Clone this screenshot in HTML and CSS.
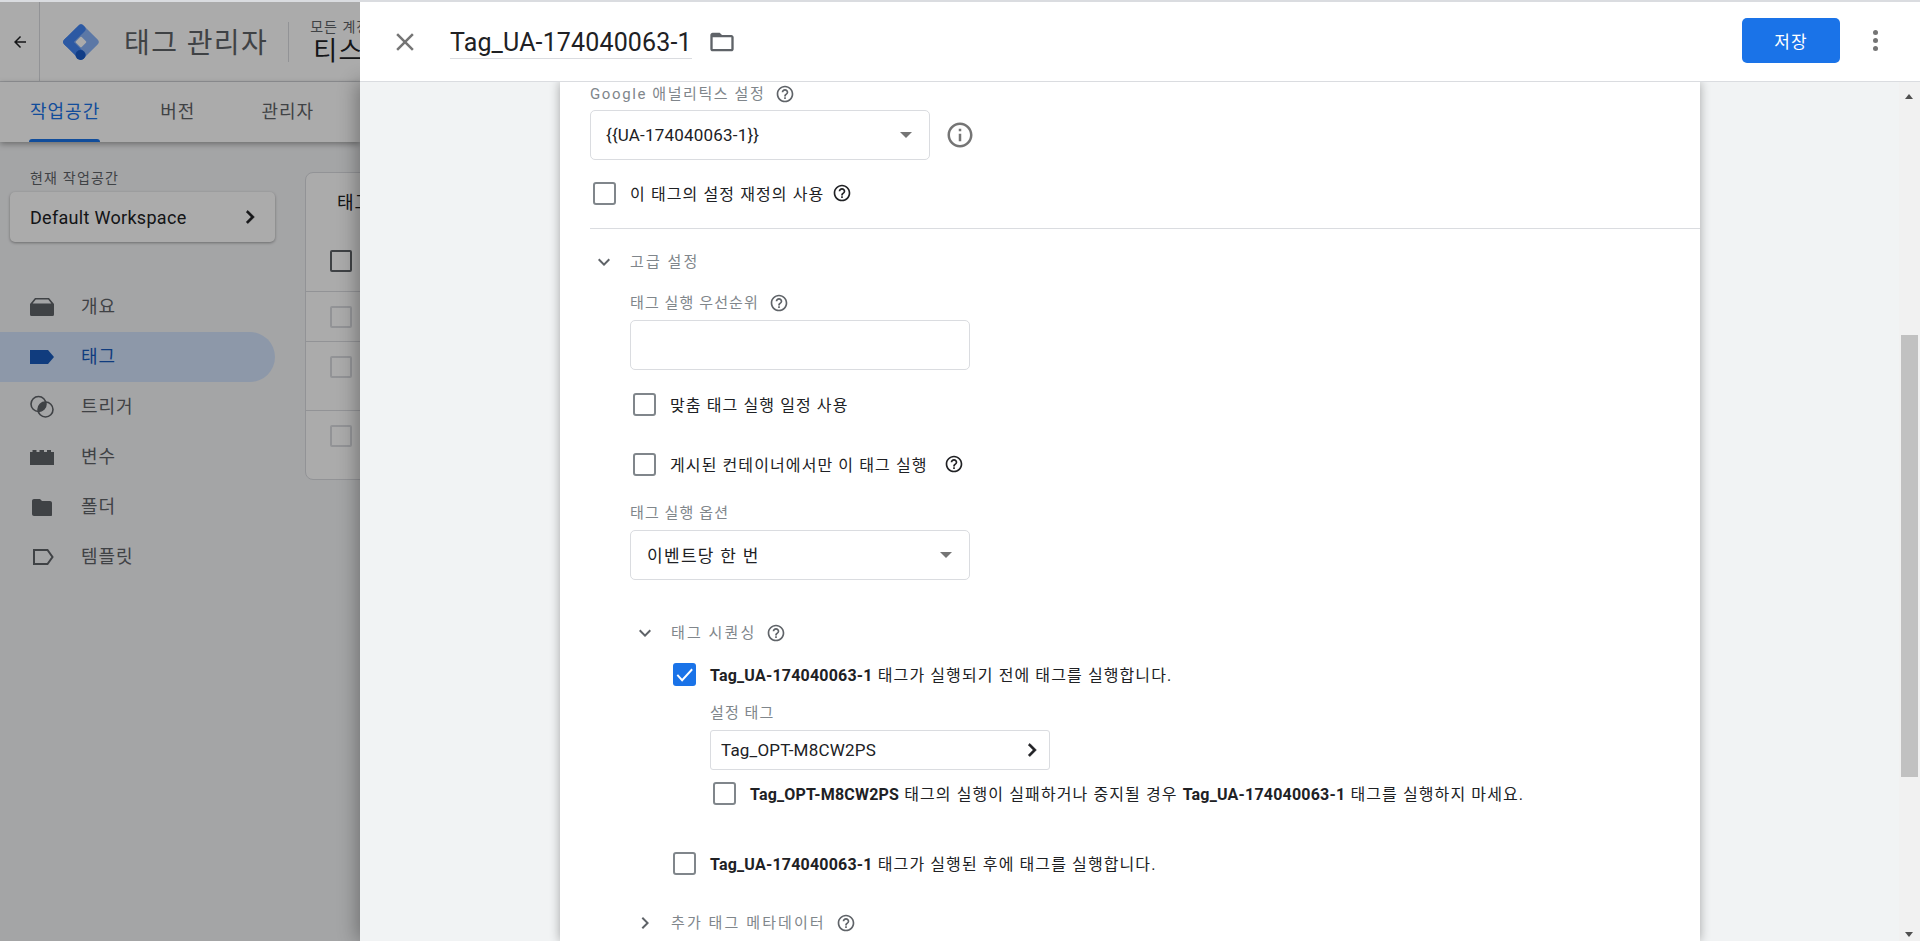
FILE: index.html
```html
<!DOCTYPE html>
<html lang="ko">
<head>
<meta charset="utf-8">
<title>태그 관리자</title>
<link rel="stylesheet" href="styles.css">
</head>
<body>
<svg class="defs" width="0" height="0" aria-hidden="true">
  <symbol id="i-help" viewBox="0 0 24 24"><path d="M11 18h2v-2h-2v2zm1-16C6.48 2 2 6.48 2 12s4.48 10 10 10 10-4.48 10-10S17.52 2 12 2zm0 18c-4.41 0-8-3.59-8-8s3.59-8 8-8 8 3.59 8 8-3.59 8-8 8zm0-14c-2.21 0-4 1.79-4 4h2c0-1.1.9-2 2-2s2 .9 2 2c0 2-3 1.75-3 5h2c0-2.25 3-2.5 3-5 0-2.21-1.79-4-4-4z"/></symbol>
  <symbol id="i-info" viewBox="0 0 24 24"><path d="M11 7h2v2h-2zm0 4h2v6h-2zm1-9C6.48 2 2 6.48 2 12s4.48 10 10 10 10-4.48 10-10S17.52 2 12 2zm0 18c-4.41 0-8-3.59-8-8s3.59-8 8-8 8 3.59 8 8-3.59 8-8 8z"/></symbol>
  <symbol id="i-right" viewBox="0 0 24 24"><path d="M10 6L8.59 7.41 13.17 12l-4.58 4.59L10 18l6-6z"/></symbol>
  <symbol id="i-down" viewBox="0 0 24 24"><path d="M16.59 8.59L12 13.17 7.41 8.59 6 10l6 6 6-6z"/></symbol>
</svg>
<div class="topline"></div>
<div class="stage">
  <div class="page">
    <header class="gtm-bar">
      <div class="back"><svg class="ic-back" viewBox="0 0 24 24"><path d="M20 11H7.83l5.59-5.59L12 4l-8 8 8 8 1.41-1.41L7.83 13H20v-2z"/></svg></div>
      <svg class="logo" viewBox="0 0 38 38">
        <g transform="rotate(45 19 19)">
          <rect x="5.5" y="5.5" width="27" height="27" rx="3.5" fill="#8ab4f8"/>
          <rect x="5.5" y="5.5" width="8.5" height="27" rx="3.5" fill="#4285f4"/>
          <rect x="5.5" y="24" width="27" height="8.5" rx="3.5" fill="#4285f4"/>
          <rect x="15" y="15" width="8" height="8" rx="1" fill="#fff"/>
        </g>
        <circle cx="18.5" cy="32" r="5" fill="#1a5cc8"/>
      </svg>
      <div class="product">태그 관리자</div>
      <div class="sep"></div>
      <div class="crumb"><div class="crumb-top">모든 계정</div><div class="crumb-name">티스토리</div></div>
    </header>
    <nav class="tabs">
      <span class="tab active">작업공간</span><span class="tab tab2">버전</span><span class="tab tab3">관리자</span>
    </nav>
    <div class="under">
      <aside class="side">
        <div class="ws-label">현재 작업공간</div>
        <div class="ws"><span>Default Workspace</span><svg class="ws-ic"><use href="#i-right"/></svg></div>
        <ul class="nav">
          <li class="nav-item"><svg class="nav-ic" viewBox="0 0 24 24"><path fill-rule="evenodd" d="M5 3h14l5 6v10.500a1.500 1.500 0 0 1-1.500 1.500h-21A1.500 1.500 0 0 1 0 19.500V9zM5.800 4.600L2.600 8.500h18.800l-3.200-3.900z"/></svg>개요</li>
          <li class="nav-item on"><svg class="nav-ic" viewBox="0 0 24 24"><path d="M0 5h18l6 7-6 7H0z"/></svg>태그</li>
          <li class="nav-item"><svg class="nav-ic" viewBox="0 0 24 24"><circle cx="8.500" cy="9" r="7.500" fill="none" stroke="currentColor" stroke-width="1.600"/><circle cx="15.500" cy="14.500" r="7.500" fill="none" stroke="currentColor" stroke-width="1.600"/><path d="M15.800 7.200a7.500 7.500 0 0 1-7.600 9.300 7.500 7.500 0 0 1 7.600-9.300z"/></svg>트리거</li>
          <li class="nav-item"><svg class="nav-ic" viewBox="0 0 24 24"><path d="M0 7h2.500V5h4v2h3V5h4.500v2h3V5h4v2H24v13H0z"/></svg>변수</li>
          <li class="nav-item"><svg class="nav-ic" viewBox="0 0 24 24"><path d="M10 4H4c-1.100 0-2 .900-2 2v13c0 1.100.900 2 2 2h17c.600 0 1-.400 1-1V8c0-1.100-.900-2-2-2h-8z"/></svg>폴더</li>
          <li class="nav-item"><svg class="nav-ic" viewBox="0 0 24 24"><path fill="none" stroke="currentColor" stroke-width="2" d="M4 5h13.500l5 7-5 7H4z"/></svg>템플릿</li>
        </ul>
      </aside>
      <section class="list">
        <div class="list-title">태그</div>
        <div class="list-row head"><i class="list-cb dark"></i></div>
        <div class="list-row"><i class="list-cb"></i></div>
        <div class="list-row tall"><i class="list-cb"></i></div>
        <div class="list-row last"><i class="list-cb"></i></div>
      </section>
    </div>
    <div class="dim"></div>
  </div>

  <div class="drawer">
    <header class="d-head">
      <svg class="d-close" viewBox="0 0 24 24"><path d="M19 6.410L17.590 5 12 10.590 6.410 5 5 6.410 10.590 12 5 17.590 6.410 19 12 13.410 17.590 19 19 17.590 13.410 12z"/></svg>
      <div class="d-title">Tag_UA-174040063-1</div>
      <svg class="d-folder" viewBox="0 0 24 24"><path d="M20 6h-8l-2-2H4c-1.100 0-1.990.900-1.990 2L2 18c0 1.100.900 2 2 2h16c1.100 0 2-.900 2-2V8c0-1.100-.900-2-2-2zm0 12H4V8h16v10z"/></svg>
      <button class="save">저장</button>
      <div class="kebab"><i></i><i></i><i></i></div>
    </header>
    <div class="d-body">
      <main class="card">
        <div class="lbl first"><span class="kr">Google 애널리틱스 설정</span><svg class="help"><use href="#i-help"/></svg></div>
        <div class="sel-wrap">
          <div class="sel sel-ga"><span>{{UA-174040063-1}}</span><i class="caret"></i></div>
          <svg class="info"><use href="#i-info"/></svg>
        </div>
        <label class="cb-row r-over"><i class="cb"></i><span class="kr cb-text">이 태그의 설정 재정의 사용</span><svg class="help dark h-over"><use href="#i-help"/></svg></label>
        <hr class="div">
        <div class="exp r-adv"><svg class="chev"><use href="#i-down"/></svg><span class="kr">고급 설정</span></div>
        <div class="adv">
          <div class="lbl l-prio"><span class="kr">태그 실행 우선순위</span><svg class="help"><use href="#i-help"/></svg></div>
          <div class="inp"></div>
          <label class="cb-row r-sched"><i class="cb"></i><span class="kr cb-text">맞춤 태그 실행 일정 사용</span></label>
          <label class="cb-row r-pub"><i class="cb"></i><span class="kr cb-text">게시된 컨테이너에서만 이 태그 실행</span><svg class="help dark h-pub"><use href="#i-help"/></svg></label>
          <div class="lbl l-opt"><span class="kr">태그 실행 옵션</span></div>
          <div class="sel sel-opt"><span class="kr">이벤트당 한 번</span><i class="caret"></i></div>
          <div class="exp r-seq"><svg class="chev"><use href="#i-down"/></svg><span class="kr">태그 시퀀싱</span><svg class="help"><use href="#i-help"/></svg></div>
          <div class="seq">
            <label class="cb-row r-before"><i class="cb checked"><svg viewBox="0 0 24 24"><path d="M4.500 12.500l5 5.500L20 6.500" fill="none" stroke="#fff" stroke-width="2"/></svg></i><span class="kr cb-text"><b>Tag_UA-174040063-1</b> 태그가 실행되기 전에 태그를 실행합니다.</span></label>
            <div class="sub">
              <div class="lbl l-setup"><span class="kr">설정 태그</span></div>
              <div class="pick"><span>Tag_OPT-M8CW2PS</span><svg class="pick-ic"><use href="#i-right"/></svg></div>
              <label class="cb-row r-fail"><i class="cb"></i><span class="kr cb-text"><b>Tag_OPT-M8CW2PS</b> 태그의 실행이 실패하거나 중지될 경우 <b>Tag_UA-174040063-1</b> 태그를 실행하지 마세요.</span></label>
            </div>
            <label class="cb-row r-after"><i class="cb"></i><span class="kr cb-text"><b>Tag_UA-174040063-1</b> 태그가 실행된 후에 태그를 실행합니다.</span></label>
          </div>
          <div class="exp r-meta"><svg class="chev"><use href="#i-right"/></svg><span class="kr">추가 태그 메타데이터</span><svg class="help"><use href="#i-help"/></svg></div>
        </div>
      </main>
      <div class="scroll">
        <i class="sc-up"></i>
        <div class="sc-thumb"></div>
        <i class="sc-down"></i>
      </div>
    </div>
  </div>
</div>
</body>
</html>
```
FILE: styles.css
```css
* { box-sizing: border-box; }
html, body { height: 100%; margin: 0; }
body {
  overflow: hidden;
  font-family: Roboto, "Noto Sans CJK KR", sans-serif;
  color: #202124;
  display: flex;
  flex-direction: column;
  background: #fff;
}
.defs { position: absolute; }
.topline { height: 2px; background: #dadce0; flex: none; }
.stage { flex: 1; display: flex; min-height: 0; }

/* underlying page */
.page {
  width: 360px;
  flex: none;
  position: relative;
  overflow: hidden;
  background: #f5f6f8;
  display: flex;
  flex-direction: column;
}
.gtm-bar {
  height: 80px;
  background: #fff;
  border-bottom: 1px solid #dadce0;
  display: flex;
  align-items: center;
  flex: none;
}
.back { width: 40px; height: 100%; flex: none; border-right: 1px solid #dadce0; display: flex; align-items: center; justify-content: center; }
.ic-back { width: 18px; height: 18px; fill: #202124; flex: none; }
.logo { width: 38px; height: 38px; margin-left: 22px; fill: none; flex: none; }
.product { font-size: 28px; color: #5f6368; margin: -2px 0 0 24px; letter-spacing: 1.400px; white-space: nowrap; flex: none; }
.sep { width: 1px; height: 40px; background: #dadce0; margin-left: 20px; flex: none; }
.crumb { margin-left: 21px; white-space: nowrap; flex: none; }
.crumb-top { font-size: 14px; line-height: 18px; color: #5f6368; letter-spacing: 1px; }
.crumb-name { font-size: 26px; line-height: 30px; color: #202124; letter-spacing: 1.500px; margin-left: 3px; }

.tabs {
  height: 60px;
  flex: none;
  background: #fff;
  box-shadow: 0 2px 6px rgba(0,0,0,.35);
  position: relative;
  z-index: 1;
  display: flex;
  align-items: center;
  padding: 0 0 0 30px;
  font-size: 18px;
  letter-spacing: 1px;
  color: #5f6368;
  white-space: nowrap;
}
.tab { position: relative; line-height: 24px; }
.tab2 { margin-left: 60px; }
.tab3 { margin-left: 66px; }
.active { color: #1a73e8; }
.active::after {
  content: "";
  position: absolute;
  left: -1px; right: 0; bottom: -18px;
  height: 3px;
  background: #1a73e8;
  border-radius: 3px 3px 0 0;
}
.under { flex: 1; display: flex; min-height: 0; }
.side { width: 305px; flex: none; padding-top: 26px; }
.ws-label { font-size: 14px; line-height: 20px; color: #5f6368; margin-left: 30px; letter-spacing: 1.200px; }
.ws {
  margin: 4px 0 0 10px;
  width: 265px;
  height: 50px;
  background: #fff;
  border-radius: 5px;
  box-shadow: 0 1px 3px rgba(0,0,0,.35);
  display: flex;
  align-items: center;
  justify-content: space-between;
  padding: 0 12px 0 20px;
  font-size: 18px;
  letter-spacing: .3px;
  color: #202124;
}
.ws-ic { width: 26px; height: 26px; fill: #202124; stroke: #202124; stroke-width: .6; }
.nav { list-style: none; margin: 40px 0 0; padding: 0; }
.nav-item {
  height: 50px;
  width: 275px;
  display: flex;
  align-items: center;
  padding: 0 0 4px 30px;
  font-size: 18px;
  letter-spacing: 1px;
  color: #5f6368;
}
.nav-item.on { background: #d2e3fc; color: #185abc; border-radius: 0 25px 25px 0; }
.nav-ic { width: 24px; height: 24px; margin: 4px 27px 0 0; fill: currentColor; flex: none; }
.list {
  width: 120px;
  height: 308px;
  margin-top: 30px;
  background: #fff;
  border: 1px solid #dadce0;
  border-radius: 8px;
  flex: none;
}
.list-title { height: 49px; padding: 18px 0 0 31px; font-size: 18px; line-height: 24px; color: #202124; letter-spacing: 1px; white-space: nowrap; }
.list-row { height: 50px; border-bottom: 1px solid #dadce0; padding: 14px 0 0 24px; }
.list-row.head { height: 70px; padding-top: 28px; }
.list-row.tall { height: 69px; }
.list-row.last { border-bottom: 0; }
.list-cb { display: block; width: 22px; height: 22px; border: 2px solid #dadce0; border-radius: 2px; }
.list-cb.dark { border-color: #5f6368; }
.dim { position: absolute; inset: 0; background: rgba(0,0,0,.33); z-index: 2; }

/* drawer */
.drawer { flex: 1; min-width: 0; display: flex; flex-direction: column; position: relative; z-index: 3; }
.d-head {
  height: 80px;
  flex: none;
  background: #fff;
  border-bottom: 1px solid #dadce0;
  display: flex;
  align-items: center;
  position: relative;
  z-index: 1;
}
.d-close { width: 30px; height: 30px; fill: #757575; margin-left: 30px; flex: none; }
.d-title {
  font-size: 25px;
  letter-spacing: .15px;
  line-height: 30px;
  width: 242px;
  height: 33px;
  margin-left: 30px;
  margin-top: 2px;
  padding-top: 2px;
  border-bottom: 1px solid #dadce0;
  white-space: nowrap;
}
.d-folder { width: 28px; height: 28px; fill: #5f6368; margin-left: 16px; flex: none; }
.save {
  margin-left: auto;
  margin-top: -2px;
  width: 98px;
  height: 45px;
  border: 0;
  border-radius: 5px;
  background: #1a73e8;
  color: #fff;
  font: 17px Roboto, "Noto Sans CJK KR", sans-serif;
  letter-spacing: 1px;
}
.kebab { width: 70px; margin-right: 10px; display: flex; flex-direction: column; align-items: center; gap: 3px; padding-bottom: 2px; }
.kebab i { width: 5px; height: 5px; border-radius: 50%; background: #757575; }
.d-body {
  flex: 1;
  min-height: 0;
  background: #f1f3f4;
  display: flex;
  box-shadow: -3px 0 18px rgba(0,0,0,.32);
  position: relative;
}
.card {
  margin-left: 200px;
  width: 1140px;
  flex: none;
  height: 100%;
  background: #fff;
  box-shadow: 0 0 10px rgba(0,0,0,.32);
  padding-left: 30px;
  overflow: hidden;
}
.scroll {
  margin-left: auto;
  width: 21px;
  flex: none;
  background: #f1f1f1;
  position: relative;
  padding-top: 253px;
}
.sc-thumb { width: 17px; height: 442px; margin-left: 2px; background: #c1c1c1; }
.sc-up, .sc-down { position: absolute; left: 6px; width: 0; height: 0; border-left: 4.500px solid transparent; border-right: 4.500px solid transparent; }
.sc-up { top: 12px; border-bottom: 5px solid #505050; }
.sc-down { bottom: 4px; border-top: 5px solid #505050; }

.kr { letter-spacing: 1.100px; }
.kr b { letter-spacing: .2px; font-weight: 700; }
.lbl, .exp { height: 24px; display: flex; align-items: center; font-size: 15px; color: #80868b; white-space: nowrap; }
.lbl .kr, .exp .kr { line-height: 24px; }
.exp .kr { letter-spacing: 2.100px; }
.help { width: 20px; height: 20px; fill: #5f6368; margin-left: 10px; flex: none; }
.help.dark { fill: #202124; }
.h-over { margin-left: 8px; }
.h-pub { margin-left: 16px; }
.first .kr { letter-spacing: 1.600px; }
.sel-wrap { margin-top: 4px; display: flex; align-items: center; }
.sel {
  width: 340px;
  height: 50px;
  border: 1px solid #dadce0;
  border-radius: 5px;
  display: flex;
  align-items: center;
  justify-content: space-between;
  padding: 0 17px 0 15px;
  font-size: 17px;
  letter-spacing: .2px;
  flex: none;
}
.caret { width: 0; height: 0; border-left: 6.500px solid transparent; border-right: 6.500px solid transparent; border-top: 6.500px solid #757575; }
.info { width: 30px; height: 30px; fill: #757575; margin-left: 15px; }
.cb-row { height: 24px; display: flex; align-items: center; font-size: 16px; color: #202124; white-space: nowrap; }
.cb { width: 23px; height: 23px; border: 2px solid #80868b; border-radius: 3px; margin-left: 3px; margin-right: 14px; flex: none; display: block; }
.cb.checked { background: #1a73e8; border: 0; }
.cb.checked svg { display: block; width: 23px; height: 23px; }
.r-over { margin-top: 21px; }
.div { margin: 23px 0 0; height: 1px; border: 0; background: #dadce0; }
.chev { width: 24px; height: 24px; fill: #5f6368; flex: none; }
.r-adv { margin-top: 21px; }
.r-adv .chev { margin-left: 2px; margin-right: 14px; }
.adv { padding-left: 40px; }
.l-prio { margin-top: 17px; }
.inp { width: 340px; height: 50px; margin-top: 5px; border: 1px solid #dadce0; border-radius: 5px; }
.r-sched { margin-top: 22px; }
.r-pub { margin-top: 36px; }
.l-opt { margin-top: 25px; }
.sel-opt { margin-top: 5px; padding-left: 16px; font-size: 17px; padding-right: 17px; }
.sel-opt .kr { margin-bottom: 2px; letter-spacing: 1.300px; }
.r-seq { margin-top: 41px; }
.r-seq .chev, .r-meta .chev { margin-left: 3px; margin-right: 14px; }
.seq { padding-left: 40px; }
.r-before { margin-top: 17px; }
.sub { padding-left: 40px; }
.l-setup { margin-top: 15px; }
.pick {
  width: 340px;
  height: 40px;
  margin-top: 5px;
  border: 1px solid #dadce0;
  border-radius: 3px;
  display: flex;
  align-items: center;
  justify-content: space-between;
  padding: 0 4px 0 10px;
  font-size: 17px;
  letter-spacing: .2px;
}
.pick-ic { width: 26px; height: 26px; fill: #202124; stroke: #202124; stroke-width: .6; }
.r-fail { margin-top: 11px; }
.r-after { margin-top: 46px; }
.r-meta { margin-top: 36px; }
```
